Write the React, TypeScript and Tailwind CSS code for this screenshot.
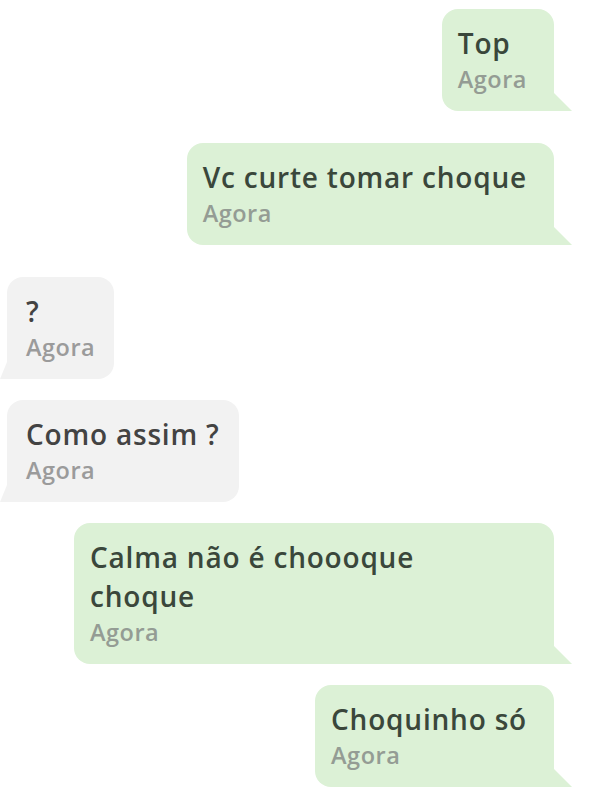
type Msg = { text: string; mine: boolean; gap: string; wrap?: boolean };

const messages: Msg[] = [
  { text: "Top", mine: true, gap: "mt-[9px]" },
  { text: "Vc curte tomar choque", mine: true, gap: "mt-[32px]" },
  { text: "?", mine: false, gap: "mt-[32px]" },
  { text: "Como assim ?", mine: false, gap: "mt-[21px]" },
  { text: "Calma não é choooque choque", mine: true, gap: "mt-[21px]", wrap: true },
  { text: "Choquinho só", mine: true, gap: "mt-[21px]" },
];

function Bubble({ msg }: { msg: Msg }) {
  return (
    <div className={`flex ${msg.mine ? "justify-end pr-[38px]" : "justify-start pl-[7px]"} ${msg.gap}`}>
      <div
        className={`relative pt-[15px] pb-[16px] ${msg.wrap ? "w-[480px]" : "max-w-[480px]"} ${
          msg.mine
            ? "pl-[16px] pr-[27px] bg-[#dcf1d6] rounded-t-[16px] rounded-bl-[16px] text-[#3a473b]"
            : "pl-[19px] pr-[19px] bg-[#f2f2f2] rounded-t-[16px] rounded-br-[16px] text-[#434343]"
        }`}
      >
        <p className={`text-[28px] leading-[39px] font-semibold tracking-[0.8px] ${msg.wrap ? "max-w-[380px]" : ""}`}>
          {msg.text}
        </p>
        <p
          className={`text-[23.5px] leading-[32px] font-semibold tracking-[0.5px] ${
            msg.mine ? "text-[#949c94]" : "text-[#9b9b9b]"
          }`}
        >
          Agora
        </p>
        {msg.mine ? (
          <svg className="absolute bottom-0 right-[-18px]" width="18" height="18" viewBox="0 0 18 18">
            <path d="M0 0 L18 18 L0 18 Z" fill="#dcf1d6" />
          </svg>
        ) : (
          <svg className="absolute bottom-0 left-[-7px]" width="7" height="17" viewBox="0 0 7 17">
            <path d="M7 0 L0 17 L7 17 Z" fill="#f2f2f2" />
          </svg>
        )}
      </div>
    </div>
  );
}

export default function App() {
  return (
    <div className="w-[592px] h-[795px] bg-white overflow-hidden" style={{ fontFamily: "'Open Sans', sans-serif" }}>
      {messages.map((m, i) => (
        <Bubble key={i} msg={m} />
      ))}
    </div>
  );
}
